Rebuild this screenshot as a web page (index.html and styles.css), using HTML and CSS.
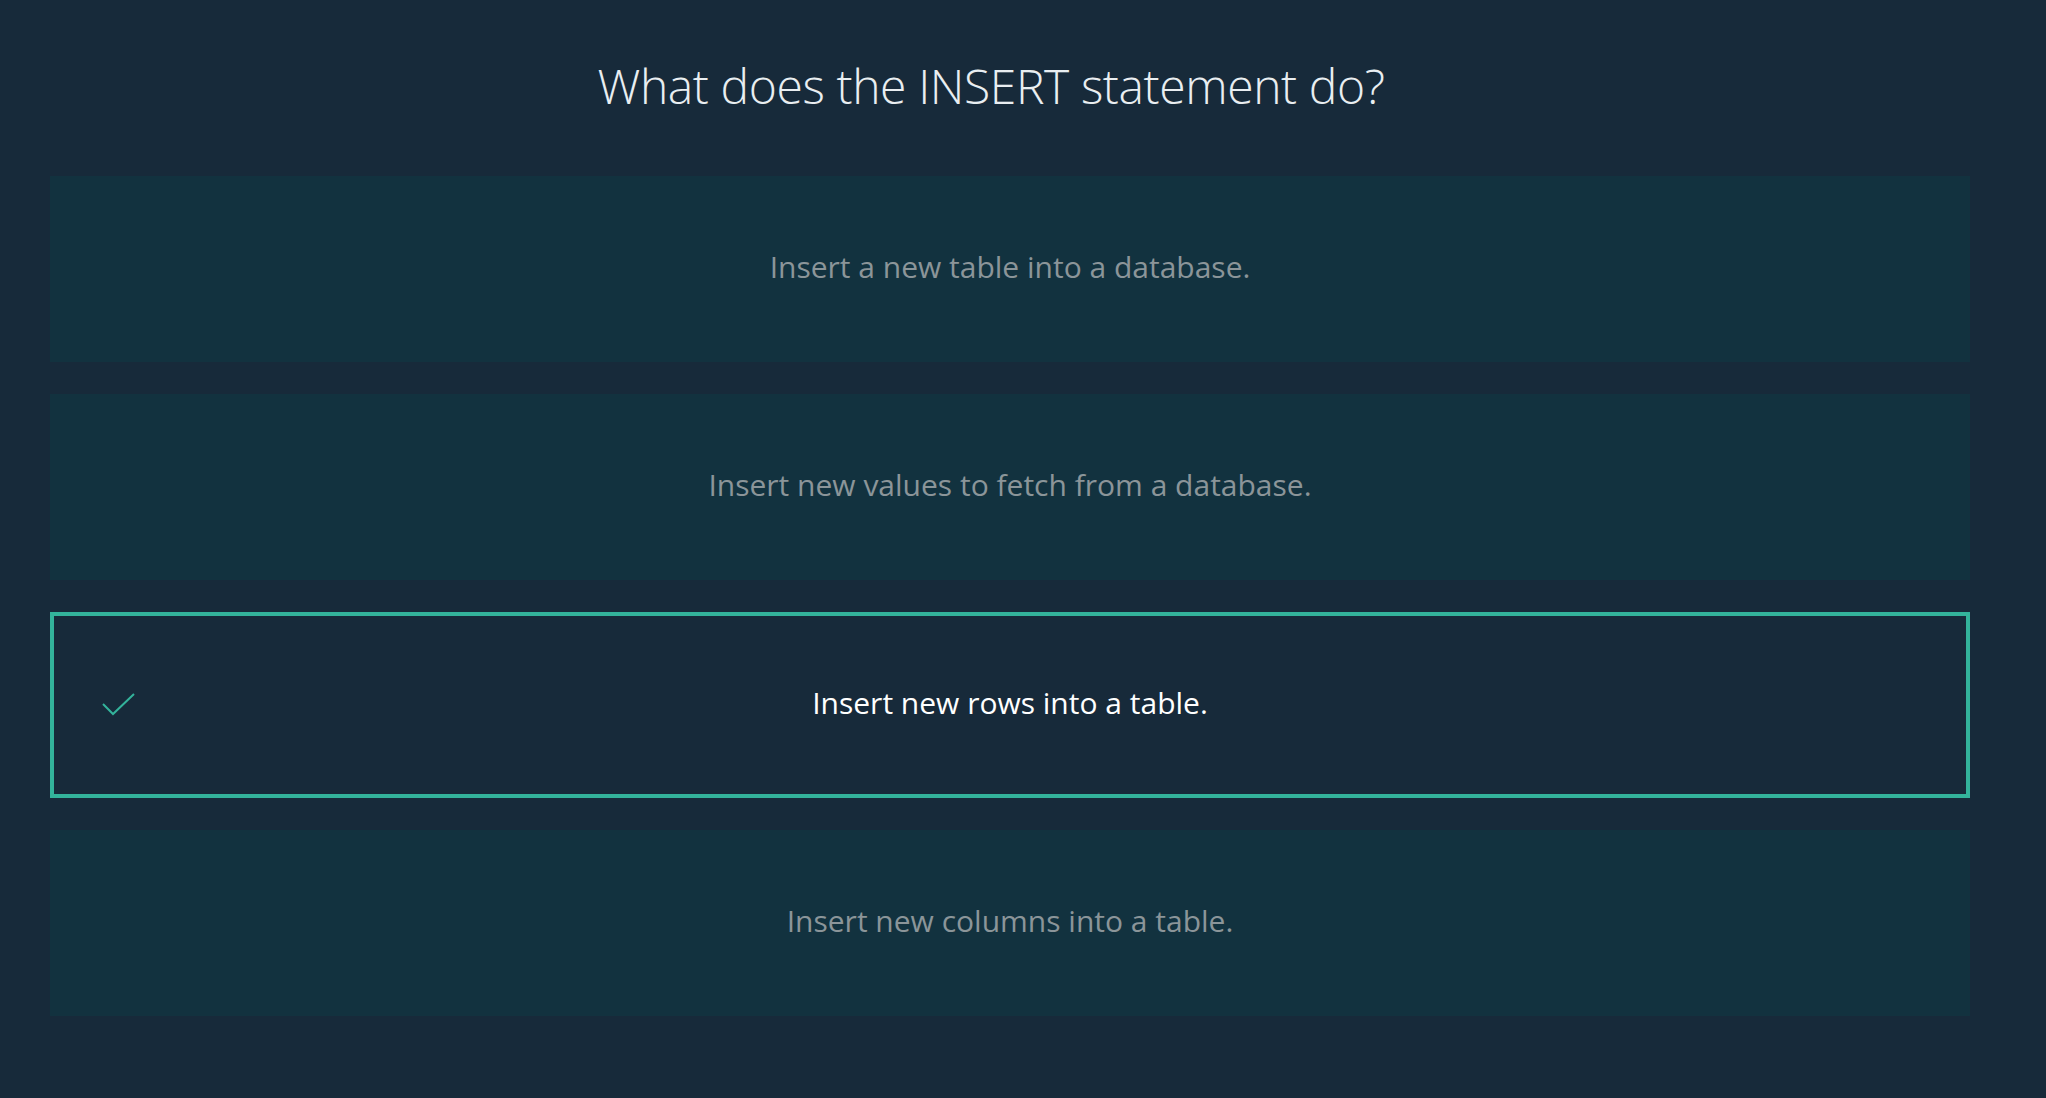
FILE: index.html
```html
<!DOCTYPE html>
<html lang="en">
<head>
<meta charset="utf-8">
<title>Quiz</title>
<link rel="stylesheet" href="styles.css">
</head>
<body>
<main class="quiz">
  <h1 class="question">What does the INSERT statement do?</h1>
  <div class="options">
    <div class="option"><span class="label">Insert a new table into a database.</span></div>
    <div class="option"><span class="label">Insert new values to fetch from a database.</span></div>
    <div class="option selected">
      <svg class="check" width="34" height="24" viewBox="0 0 34 24" aria-hidden="true">
        <path d="M1 11 L11 21 L32 1" fill="none" stroke="#33b39b" stroke-width="2"/>
      </svg>
      <span class="label">Insert new rows into a table.</span>
    </div>
    <div class="option"><span class="label">Insert new columns into a table.</span></div>
  </div>
</main>
</body>
</html>
```
FILE: styles.css
```css
html, body {
  margin: 0;
  padding: 0;
  background: #172a3a;
  height: 100%;
}
body {
  font-family: "Open Sans", "Noto Sans", sans-serif;
}
.quiz {
  padding: 0 76px 0 50px;
}
.question {
  margin: 0;
  padding: 56px 38px 60px 0;
  font-size: 48px;
  line-height: 60px;
  font-weight: 300;
  color: #e9eef1;
  text-align: center;
  letter-spacing: -0.4px;
}
.options {
  display: flex;
  flex-direction: column;
  gap: 32px;
}
.option {
  position: relative;
  box-sizing: border-box;
  height: 186px;
  padding-bottom: 5px;
  background: #12323f;
  display: flex;
  align-items: center;
  justify-content: center;
}
.label {
  font-size: 30px;
  font-weight: 400;
  color: #8b9599;
}
.option.selected {
  background: #172a3a;
  border: 4px solid #33b39b;
}
.option.selected .label {
  color: #ffffff;
}
.check {
  position: absolute;
  left: 48px;
  top: 77px;
}
```
